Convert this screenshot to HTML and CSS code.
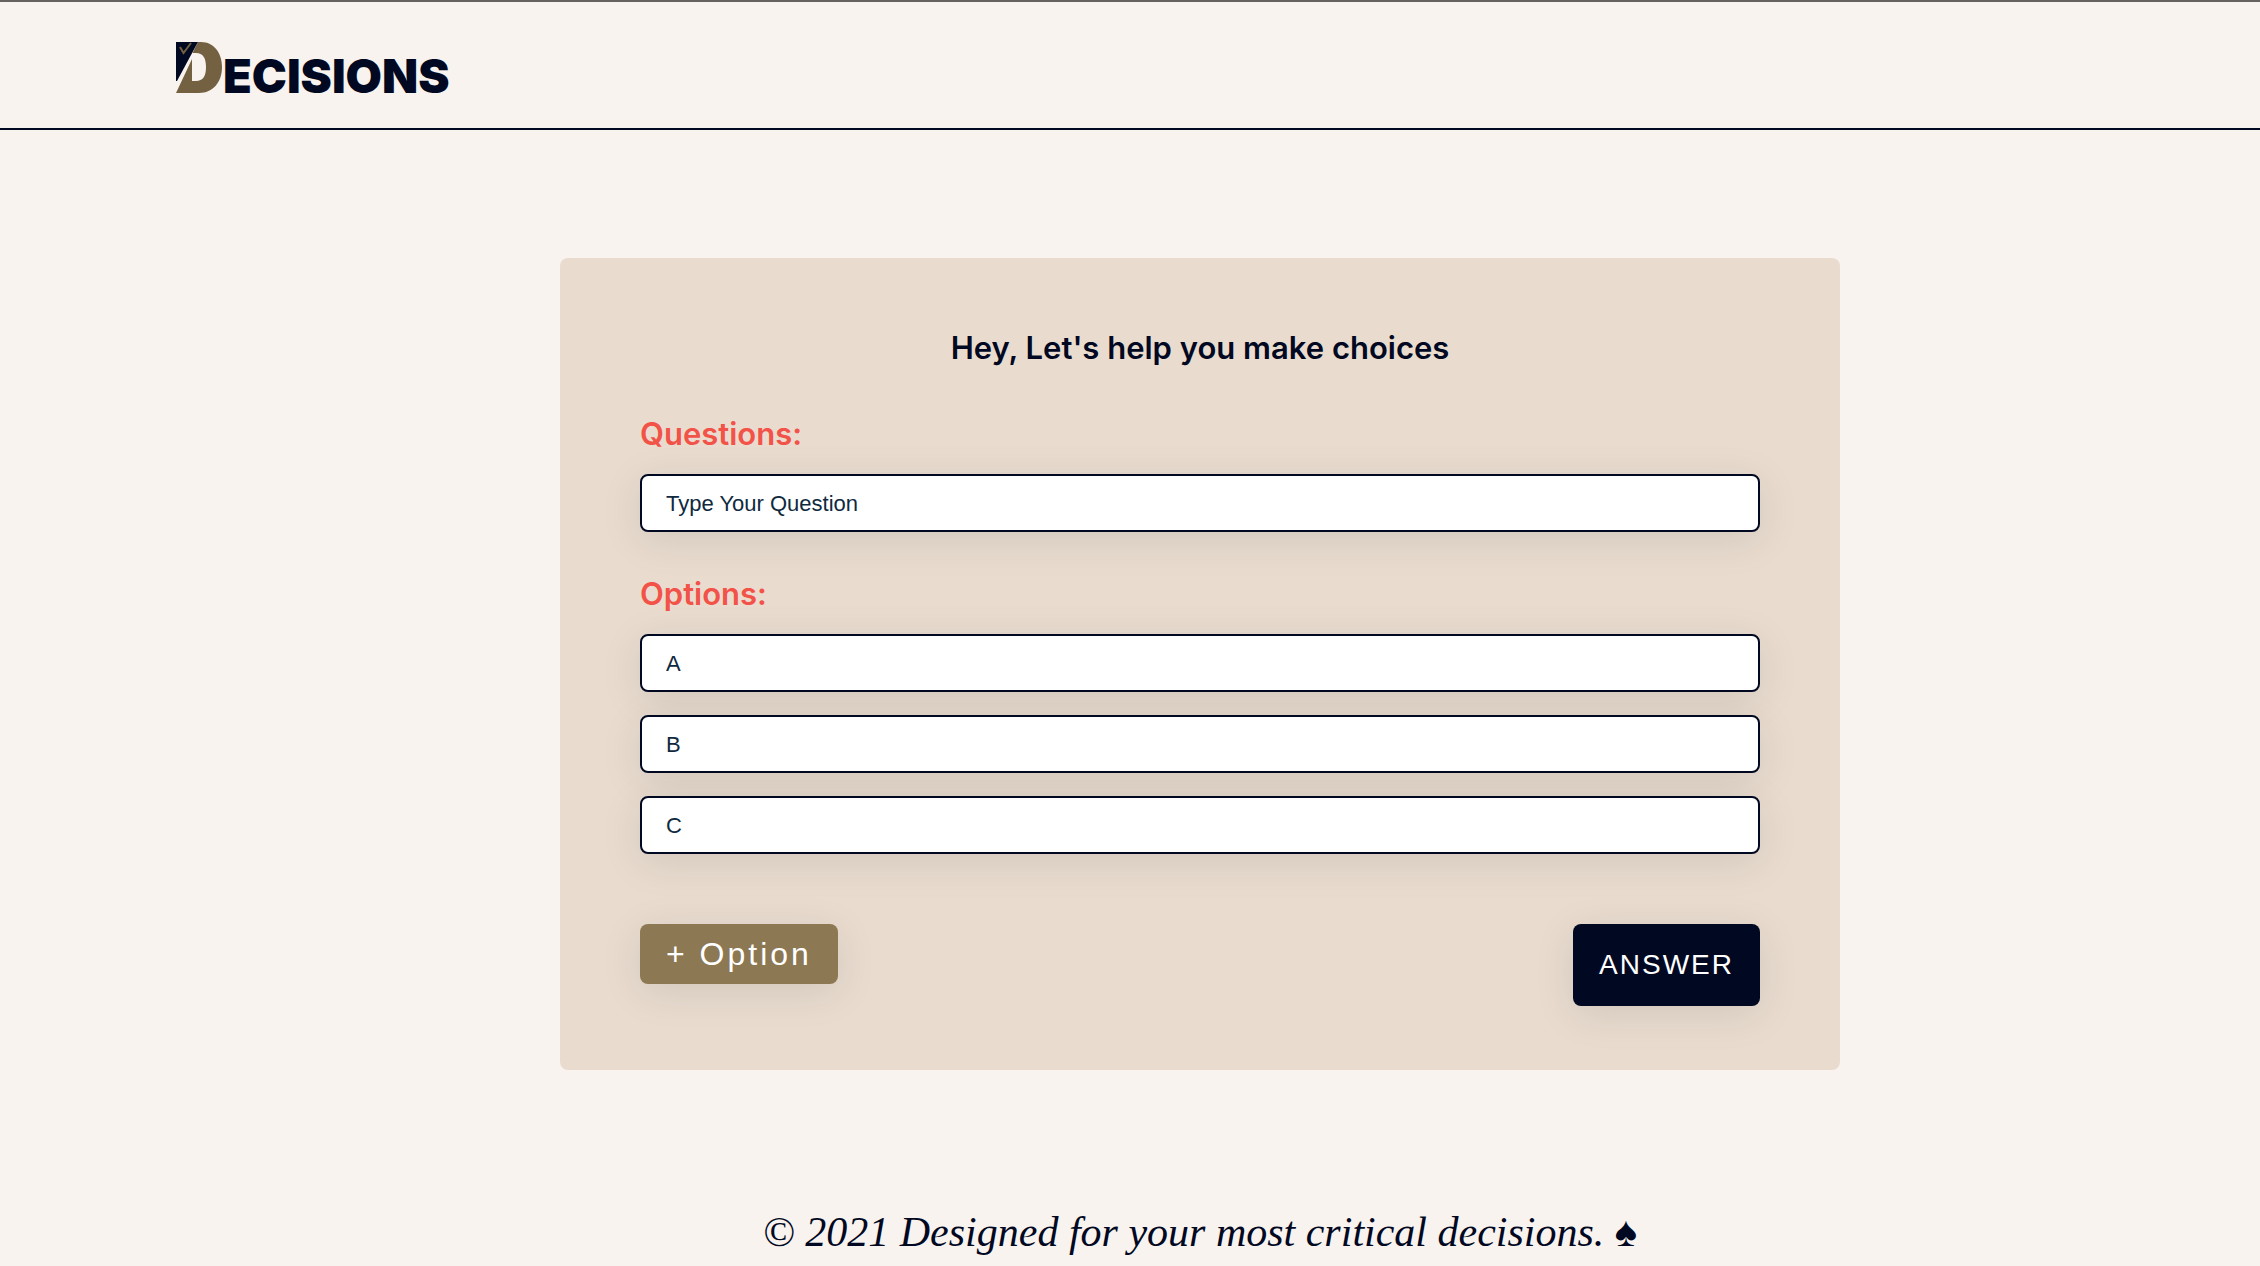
FILE: index.html
```html
<!DOCTYPE html>
<html lang="en">
<head>
<meta charset="utf-8">
<meta name="viewport" content="width=device-width, initial-scale=1">
<title>Decisions</title>
<link rel="stylesheet" href="styles.css">
</head>
<body>
<header class="header">
  <a class="logo" href="#" aria-label="Decisions">
    <svg class="logo-mark" viewBox="0 0 46 51" aria-hidden="true">
      <path class="mark-gold" d="M22 0H25C38 0 46 11 46 25C46 40 37 51 23 51H0L16 17V39H20C27 39 30 34 30 25C30 16 27 11 20 11H16.500Z"/>
      <path class="mark-navy" d="M0 0H22L1 39H0Z"/>
      <path class="mark-check" d="M4 5L7.500 11L15 1"/>
    </svg>
    <span class="logo-text">ECISIONS</span>
  </a>
</header>
<main class="main">
  <form class="card">
    <h1 class="title">Hey, Let's help you make choices</h1>
    <div class="group">
      <label class="label" for="question">Questions:</label>
      <input class="field" id="question" type="text" placeholder="Type Your Question">
    </div>
    <div class="group">
      <label class="label" for="option-a">Options:</label>
      <div class="options">
        <input class="field" id="option-a" type="text" placeholder="A">
        <input class="field" type="text" placeholder="B" aria-label="Option B">
        <input class="field" type="text" placeholder="C" aria-label="Option C">
      </div>
    </div>
    <div class="actions">
      <button class="button button-add" type="button">+ Option</button>
      <button class="button button-answer" type="submit">ANSWER</button>
    </div>
  </form>
</main>
<footer class="footer">© 2021 Designed for your most critical decisions. <span class="spade">♠</span></footer>
</body>
</html>
```

FILE: styles.css
```css
* {
  box-sizing: border-box;
}

body {
  margin: 0;
  border-top: 2px solid #66625f;
  background: #f9f3ef;
  color: #010822;
  font-family: Inter, sans-serif;
}

.header {
  display: flex;
  align-items: flex-start;
  height: 128px;
  padding: 40px 176px 0;
  border-bottom: 2px solid #010822;
}

.logo {
  display: flex;
  align-items: baseline;
  gap: 1px;
  color: #010822;
  text-decoration: none;
}

.logo-mark {
  width: 46px;
  height: 51px;
}

.mark-gold {
  fill: #736142;
}

.mark-navy {
  fill: #010822;
}

.mark-check {
  fill: none;
  stroke: #736142;
  stroke-width: 2;
}

.logo-text {
  font-size: 47px;
  font-weight: 900;
  line-height: 52px;
}

.main {
  display: flex;
  justify-content: center;
  padding: 128px 0 136px 140px;
}

.card {
  width: 100%;
  max-width: 1280px;
  padding: 70px 80px 64px;
  border-radius: 8px;
  background: #e9dccf;
}

.title {
  margin: 0 0 46px;
  font-size: 31px;
  font-weight: 600;
  line-height: 40px;
  text-align: center;
}

.group {
  margin-bottom: 42px;
}

.label {
  display: block;
  margin-bottom: 20px;
  color: #f25247;
  font-size: 31px;
  font-weight: 600;
  line-height: 40px;
}

.field {
  display: block;
  width: 100%;
  height: 58px;
  padding: 2px 24px 0;
  border: 2px solid #010822;
  border-radius: 8px;
  background: #fff;
  box-shadow: 0 8px 40px rgba(1, 8, 34, 0.1);
  color: #0f2a40;
  font-family: "Liberation Sans", Arial, sans-serif;
  font-size: 22px;
}

.field::placeholder {
  color: #0f2a40;
  opacity: 1;
}

.options {
  display: grid;
  gap: 23px;
}

.actions {
  display: flex;
  align-items: flex-start;
  justify-content: space-between;
  margin-top: 70px;
}

.button {
  padding: 0 26px;
  border: 0;
  border-radius: 8px;
  box-shadow: 0 8px 40px rgba(1, 8, 34, 0.1);
  color: #fff;
  font-family: "Liberation Sans", Arial, sans-serif;
}

.button-add {
  height: 60px;
  background: #8c7853;
  font-size: 32px;
  letter-spacing: 3px;
}

.button-answer {
  height: 82px;
  background: #010822;
  font-size: 28px;
  letter-spacing: 2px;
}

.footer {
  padding-left: 140px;
  font-family: "Apple Chancery", "Liberation Serif", serif;
  font-size: 42px;
  font-style: italic;
  line-height: 52px;
  text-align: center;
}

.spade {
  font-style: normal;
}
```
